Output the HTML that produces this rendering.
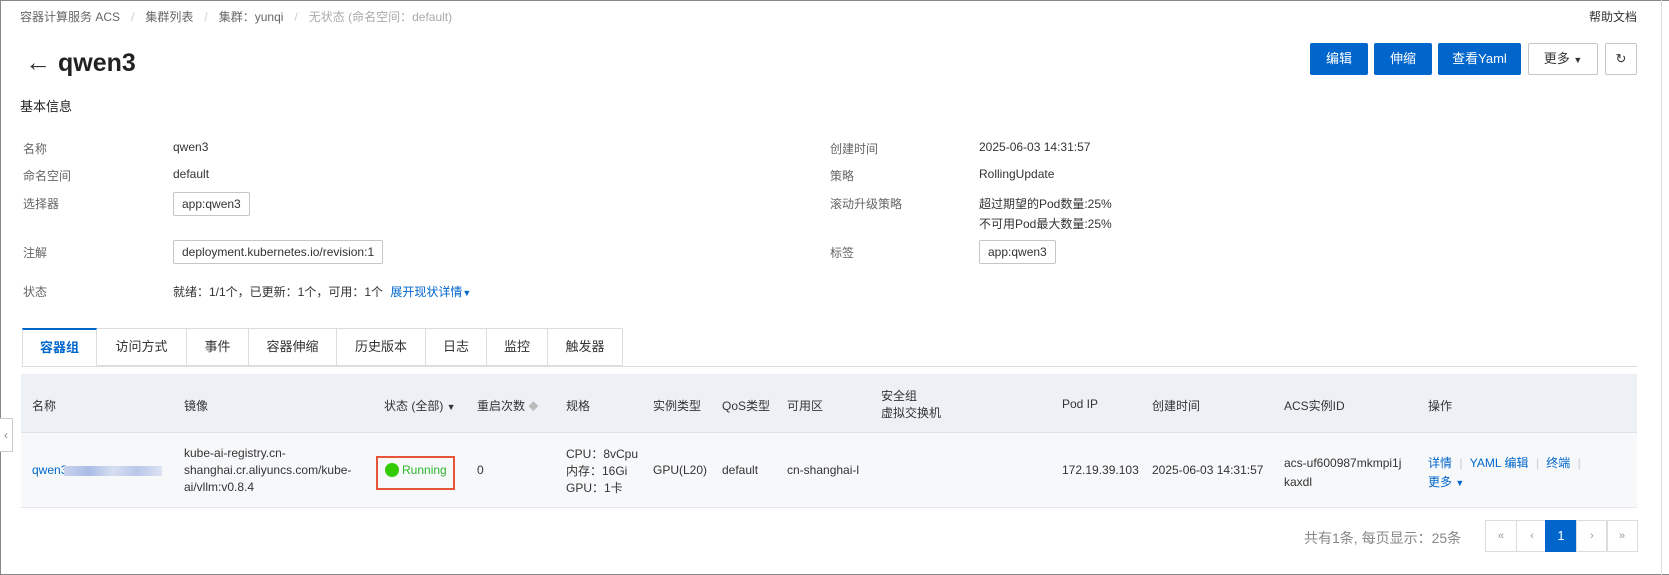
<!DOCTYPE html>
<html><head><meta charset="utf-8"><style>
*{box-sizing:border-box;margin:0;padding:0}
body{width:1669px;height:575px;background:#fff;font-family:"Liberation Sans","Noto Sans CJK SC",sans-serif;font-size:12px;color:#333;position:relative;overflow:hidden}
.frame{position:absolute;left:0;top:0;width:1669px;height:575px;border:1px solid #888;border-right:none}
.rline{position:absolute;left:1661px;top:0;width:1px;height:575px;background:#ddd}
.a{position:absolute;white-space:nowrap}
.g{color:#666}
.btn{position:absolute;top:43px;height:32px;background:#0066cc;color:#fff;border-radius:2px;text-align:center;line-height:32px;font-size:13px}
.wbtn{position:absolute;top:43px;height:32px;background:#fff;border:1px solid #c4c6cc;border-radius:2px;text-align:center;line-height:30px;font-size:13px}
.box{position:absolute;border:1px solid #c4c6cc;border-radius:2px;height:24px;line-height:22px;padding:0 8px;background:#fff}
.tab{position:absolute;top:328px;height:38px;border:1px solid #ddd;border-left:none;line-height:36px;text-align:center;font-size:13px;background:#fff}
.blue{color:#0066cc}
.pg{position:absolute;top:520px;height:32px;width:32px;border:1px solid #ddd;text-align:center;line-height:30px;color:#999;font-size:11px}
</style></head><body>
<div class="frame"></div><div class="rline"></div>
<div class="a g" style="left:20px;top:8px">容器计算服务 ACS<span style="color:#ccc;margin:0 11px">/</span>集群列表<span style="color:#ccc;margin:0 11px">/</span>集群：yunqi<span style="color:#ccc;margin:0 11px">/</span><span style="color:#aaa">无状态 (命名空间：default)</span></div>
<div class="a" style="left:1589px;top:8px">帮助文档</div>
<div class="a" style="left:25px;top:47px;font-size:26px;color:#333;line-height:30px">&#8592;</div>
<div class="a" style="left:58px;top:48px;font-size:25px;font-weight:bold;color:#222;line-height:30px">qwen3</div>
<div class="btn" style="left:1310px;width:58px">编辑</div>
<div class="btn" style="left:1374px;width:58px">伸缩</div>
<div class="btn" style="left:1438px;width:83px">查看Yaml</div>
<div class="wbtn" style="left:1528px;width:70px">更多 <span style="font-size:9px">&#9660;</span></div>
<div class="wbtn" style="left:1605px;width:32px">&#8635;</div>
<div class="a" style="left:20px;top:96px;font-size:13px;color:#222">基本信息</div>
<div class="a g" style="left:23px;top:140px">名称</div><div class="a" style="left:173px;top:140px">qwen3</div>
<div class="a g" style="left:23px;top:167px">命名空间</div><div class="a" style="left:173px;top:167px">default</div>
<div class="a g" style="left:23px;top:195px">选择器</div><div class="box" style="left:173px;top:192px">app:qwen3</div>
<div class="a g" style="left:23px;top:244px">注解</div><div class="box" style="left:173px;top:240px">deployment.kubernetes.io/revision:1</div>
<div class="a g" style="left:23px;top:283px">状态</div><div class="a" style="left:173px;top:283px">就绪：1/1个，已更新：1个，可用：1个 <span class="blue" style="margin-left:4px">展开现状详情<span style="font-size:9px">&#9660;</span></span></div>
<div class="a g" style="left:830px;top:140px">创建时间</div><div class="a" style="left:979px;top:140px">2025-06-03 14:31:57</div>
<div class="a g" style="left:830px;top:167px">策略</div><div class="a" style="left:979px;top:167px">RollingUpdate</div>
<div class="a g" style="left:830px;top:195px">滚动升级策略</div><div class="a" style="left:979px;top:195px">超过期望的Pod数量:25%</div>
<div class="a" style="left:979px;top:215px">不可用Pod最大数量:25%</div>
<div class="a g" style="left:830px;top:244px">标签</div><div class="box" style="left:979px;top:240px">app:qwen3</div>
<div style="position:absolute;left:21px;top:366px;width:1616px;height:1px;background:#ddd"></div>
<div class="tab blue" style="left:22px;width:75px;border-left:1px solid #ddd;border-top:2px solid #0066cc;border-bottom-color:#fff;font-weight:bold">容器组</div>
<div class="tab" style="left:97px;width:90px">访问方式</div>
<div class="tab" style="left:187px;width:62px">事件</div>
<div class="tab" style="left:249px;width:88px">容器伸缩</div>
<div class="tab" style="left:337px;width:89px">历史版本</div>
<div class="tab" style="left:426px;width:61px">日志</div>
<div class="tab" style="left:487px;width:61px">监控</div>
<div class="tab" style="left:548px;width:75px">触发器</div>
<div style="position:absolute;left:21px;top:374px;width:1616px;height:59px;background:#edf1f6;border-bottom:1px solid #dde3ea"></div>
<div style="position:absolute;left:21px;top:433px;width:1616px;height:75px;background:#f7f8fa;border-bottom:1px solid #e3e6ea"></div>
<div class="a" style="left:32px;top:397px">名称</div>
<div class="a" style="left:184px;top:397px">镜像</div>
<div class="a" style="left:384px;top:397px">状态 (全部) <span style="font-size:9px">&#9660;</span></div>
<div class="a" style="left:477px;top:397px">重启次数 <span style="color:#bbb;font-size:10px">&#9670;</span></div>
<div class="a" style="left:566px;top:397px">规格</div>
<div class="a" style="left:653px;top:397px">实例类型</div>
<div class="a" style="left:722px;top:397px">QoS类型</div>
<div class="a" style="left:787px;top:397px">可用区</div>
<div class="a" style="left:881px;top:388px;line-height:17px">安全组<br>虚拟交换机</div>
<div class="a" style="left:1062px;top:397px">Pod IP</div>
<div class="a" style="left:1152px;top:397px">创建时间</div>
<div class="a" style="left:1284px;top:397px">ACS实例ID</div>
<div class="a" style="left:1428px;top:397px">操作</div>
<div class="a blue" style="left:32px;top:463px">qwen3<span style="display:inline-block;width:98px;height:10px;background:linear-gradient(90deg,#c9d3ec,#a9bbe6,#d7def0,#b9c7ea,#dde3f2);vertical-align:middle;margin-left:-3px"></span></div>
<div class="a" style="left:184px;top:445px;line-height:17px">kube-ai-registry.cn-<br>shanghai.cr.aliyuncs.com/kube-<br>ai/vllm:v0.8.4</div>
<div style="position:absolute;left:376px;top:456px;width:79px;height:34px;border:2px solid #e8543a"></div>
<div class="a" style="left:385px;top:463px;color:#2db52d"><span style="display:inline-block;width:14px;height:14px;border-radius:50%;background:#33cc00;vertical-align:-3px;margin-right:3px"></span>Running</div>
<div class="a" style="left:477px;top:463px">0</div>
<div class="a" style="left:566px;top:446px;line-height:17px">CPU：8vCpu<br>内存：16Gi<br>GPU：1卡</div>
<div class="a" style="left:653px;top:463px">GPU(L20)</div>
<div class="a" style="left:722px;top:463px">default</div>
<div class="a" style="left:787px;top:463px">cn-shanghai-l</div>
<div class="a" style="left:1062px;top:463px">172.19.39.103</div>
<div class="a" style="left:1152px;top:463px">2025-06-03 14:31:57</div>
<div class="a" style="left:1284px;top:454px;line-height:19px">acs-uf600987mkmpi1j<br>kaxdl</div>
<div class="a blue" style="left:1428px;top:454px;line-height:19px">详情 <span style="color:#ccc;margin:0 4px">|</span> YAML 编辑 <span style="color:#ccc;margin:0 4px">|</span> 终端 <span style="color:#ccc;margin:0 4px">|</span><br>更多 <span style="font-size:9px">&#9660;</span></div>
<div class="a" style="left:1304px;top:528px;color:#888;font-size:14px">共有1条, 每页显示：25条</div>
<div class="pg" style="left:1485px">«</div>
<div class="pg" style="left:1516px">‹</div>
<div class="pg" style="left:1545px;background:#0066cc;border-color:#0066cc;color:#fff;font-size:13px">1</div>
<div class="pg" style="left:1576px">›</div>
<div class="pg" style="left:1606px">»</div>
<div style="position:absolute;left:0;top:418px;width:13px;height:34px;border:1px solid #ccc;border-left:none;background:#fff;color:#888;font-size:12px;line-height:32px;text-align:center">‹</div>
</body></html>
